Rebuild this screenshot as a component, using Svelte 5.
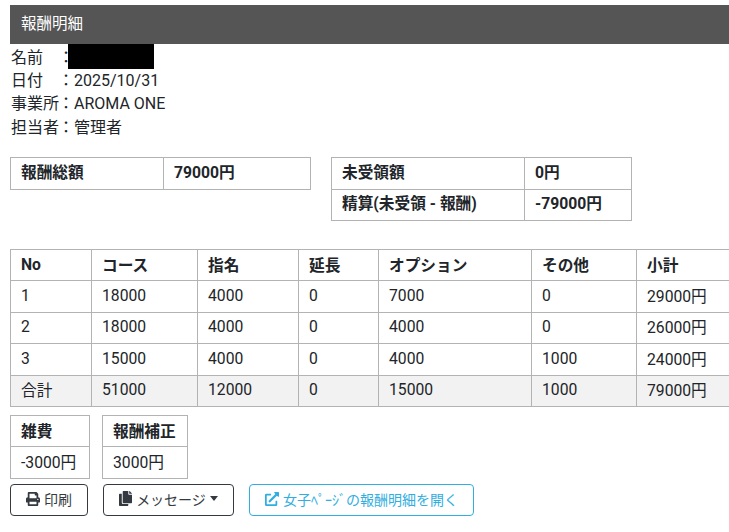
<script>
    const rows = [
        ["1", "18000", "4000", "0", "7000", "0", "29000円"],
        ["2", "18000", "4000", "0", "4000", "0", "26000円"],
        ["3", "15000", "4000", "0", "4000", "1000", "24000円"],
    ];
    const heads = ["No", "コース", "指名", "延長", "オプション", "その他", "小計"];
    const totals = ["合計", "51000", "12000", "0", "15000", "1000", "79000円"];
</script>

<div class="page">
    <h1 class="title">報酬明細</h1>

    <div class="info">
        <div class="line name"><span class="label">名前</span>：<span class="mask"></span></div>
        <div class="line"><span class="label">日付</span>：2025/10/31</div>
        <div class="line"><span class="label">事業所</span>：AROMA ONE</div>
        <div class="line"><span class="label">担当者</span>：管理者</div>
    </div>

    <div class="summary">
        <table class="box sum-left">
            <tbody>
                <tr><th>報酬総額</th><th>79000円</th></tr>
            </tbody>
        </table>
        <table class="box sum-right">
            <tbody>
                <tr><th>未受領額</th><th>0円</th></tr>
                <tr><th>精算(未受領 - 報酬)</th><th>-79000円</th></tr>
            </tbody>
        </table>
    </div>

    <table class="box detail">
        <thead>
            <tr>
                {#each heads as h}
                    <th>{h}</th>
                {/each}
            </tr>
        </thead>
        <tbody>
            {#each rows as row}
                <tr>
                    {#each row as cell}
                        <td>{cell}</td>
                    {/each}
                </tr>
            {/each}
            <tr class="total">
                {#each totals as cell}
                    <td>{cell}</td>
                {/each}
            </tr>
        </tbody>
    </table>

    <div class="extras">
        <table class="box misc">
            <tbody>
                <tr><th>雑費</th></tr>
                <tr><td>-3000円</td></tr>
            </tbody>
        </table>
        <table class="box adjust">
            <tbody>
                <tr><th>報酬補正</th></tr>
                <tr><td>3000円</td></tr>
            </tbody>
        </table>
    </div>

    <div class="buttons">
        <button class="btn print">
            <svg class="icon" viewBox="0 0 512 512"><path d="M448 192V77.25c0-8.49-3.37-16.62-9.37-22.63L393.37 9.37c-6-6-14.14-9.37-22.63-9.37H96C78.33 0 64 14.33 64 32v160c-35.35 0-64 28.65-64 64v112c0 8.84 7.16 16 16 16h48v96c0 17.67 14.33 32 32 32h320c17.67 0 32-14.33 32-32v-96h48c8.84 0 16-7.16 16-16V256c0-35.35-28.65-64-64-64zm-64 256H128v-96h256v96zm0-224H128V64h192v48c0 8.84 7.16 16 16 16h48v96zm48 72c-13.25 0-24-10.75-24-24 0-13.26 10.75-24 24-24s24 10.74 24 24c0 13.25-10.75 24-24 24z"/></svg>
            印刷
        </button>
        <button class="btn message">
            <svg class="icon copy" viewBox="0 0 448 512"><path d="M320 448v40c0 13.25-10.75 24-24 24H24c-13.25 0-24-10.75-24-24V120c0-13.25 10.75-24 24-24h72v296c0 30.88 25.12 56 56 56h168zm0-344V0H152c-13.25 0-24 10.75-24 24v368c0 13.25 10.75 24 24 24h272c13.25 0 24-10.75 24-24V128H344c-13.2 0-24-10.8-24-24zm120.97-31.03L375.03 7.03A24 24 0 0 0 358.06 0H352v96h96v-6.06a24 24 0 0 0-7.03-16.97z"/></svg>
            メッセージ
            <span class="caret"></span>
        </button>
        <button class="btn open">
            <svg class="icon" viewBox="0 0 512 512"><path d="M432 320h-32a16 16 0 0 0-16 16v112H64V128h144a16 16 0 0 0 16-16V80a16 16 0 0 0-16-16H48a48 48 0 0 0-48 48v352a48 48 0 0 0 48 48h352a48 48 0 0 0 48-48V336a16 16 0 0 0-16-16zM488 0H360c-21.37 0-32.05 25.91-17 41l35.73 35.73L135 320.37a24 24 0 0 0 0 34L157.67 377a24 24 0 0 0 34 0l243.61-243.68L471 169c15 15 41 4.5 41-17V24a24 24 0 0 0-24-24z"/></svg>
            女子ﾍﾟｰｼﾞの報酬明細を開く
        </button>
    </div>
</div>

<style>
    :global(body) {
        margin: 0;
        background: #fff;
    }
    .page {
        width: 729px;
        height: 532px;
        overflow: hidden;
        box-sizing: border-box;
        padding: 5px 0 0 10px;
        font-family: Roboto, "Noto Sans CJK JP", sans-serif;
        font-size: 16px;
        color: #212529;
    }
    .title {
        margin: 0;
        height: 39px;
        line-height: 38px;
        padding-left: 11px;
        background: #555;
        color: #fff;
        font-size: 15.5px;
        font-weight: 400;
    }
    .info {
        height: 113px;
    }
    .line {
        height: 23.4px;
        line-height: 21px;
    }
    .name {
        position: relative;
        height: 26px;
        line-height: 27px;
    }
    .label {
        display: inline-block;
        width: 48px;
        padding-left: 1px;
        box-sizing: border-box;
        white-space: nowrap;
    }
    .mask {
        position: absolute;
        left: 58px;
        top: 0;
        width: 86px;
        height: 25px;
        background: #000;
    }
    table.box {
        border-collapse: collapse;
        table-layout: fixed;
    }
    .box th,
    .box td {
        box-sizing: border-box;
        border: 1px solid #b3b3b3;
        padding: 0 0 2px 10px;
        text-align: left;
        font-size: 15.7px;
        overflow: hidden;
        white-space: nowrap;
    }
    .box th {
        font-weight: 700;
    }
    .box td {
        font-weight: 400;
    }
    .summary {
        display: flex;
        align-items: flex-start;
        gap: 20px;
        height: 92px;
    }
    .summary th {
        height: 31.5px;
        padding-bottom: 4px;
    }
    .sum-left,
    .sum-right {
        width: 301px;
    }
    .sum-left th:first-child {
        width: 153px;
    }
    .sum-right th:first-child {
        width: 193px;
    }
    .detail {
        width: 740px;
    }
    .detail th,
    .detail td {
        height: 31.4px;
    }
    .detail th:nth-child(1) { width: 81px; }
    .detail th:nth-child(2) { width: 106px; }
    .detail th:nth-child(3) { width: 101px; }
    .detail th:nth-child(4) { width: 80px; }
    .detail th:nth-child(5) { width: 153px; }
    .detail th:nth-child(6) { width: 105px; }
    .total td {
        background: #f2f2f2;
    }
    .extras {
        display: flex;
        gap: 12px;
        margin-top: 8px;
    }
    .extras th,
    .extras td {
        height: 31.4px;
    }
    .misc {
        width: 80px;
    }
    .adjust {
        width: 86px;
    }
    .buttons {
        display: flex;
        margin-top: 5px;
    }
    .btn {
        display: flex;
        align-items: center;
        justify-content: center;
        gap: 4px;
        height: 32px;
        box-sizing: border-box;
        padding: 0 0 2px;
        background: #fff;
        border: 1px solid #343a40;
        border-radius: 4px;
        color: #343a40;
        font: inherit;
        font-size: 14px;
    }
    .print {
        width: 78px;
    }
    .message {
        width: 131px;
        margin-left: 15px;
    }
    .open {
        width: 225px;
        margin-left: 15px;
        border-color: #31aee0;
        color: #31aee0;
    }
    .icon {
        width: 14px;
        height: 14px;
        fill: currentColor;
    }
    .copy {
        width: 13px;
        height: 15px;
    }
    .caret {
        width: 0;
        height: 0;
        border-top: 5px solid #343a40;
        border-left: 4px solid transparent;
        border-right: 4px solid transparent;
    }
</style>
